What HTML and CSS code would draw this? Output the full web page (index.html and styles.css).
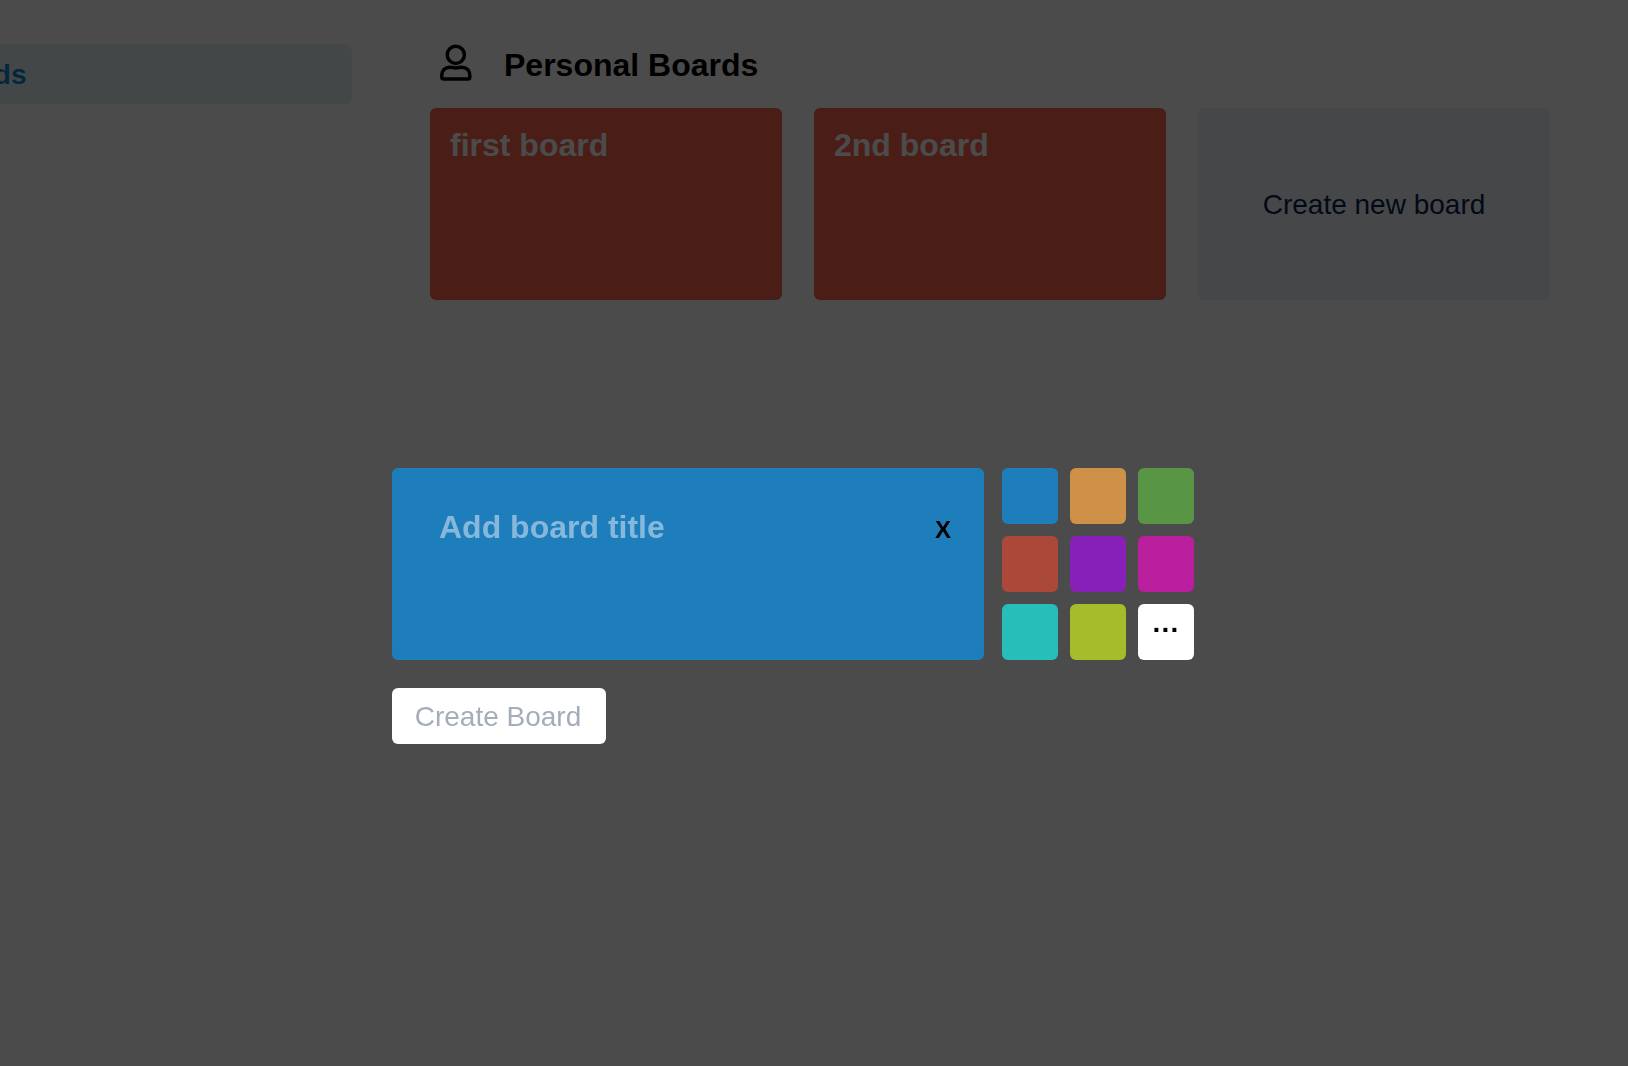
FILE: index.html
```
<!DOCTYPE html>
<html lang="en">
<head>
<meta charset="utf-8">
<title>Boards</title>
<link rel="stylesheet" href="styles.css">
</head>
<body>
<div class="page">
  <nav class="sidebar"><a class="sidebar-link">Boards</a></nav>
  <main class="content">
    <header class="section-header">
      <svg class="user-icon" viewBox="0 0 32 38" fill="none" stroke="#000" stroke-width="3.5">
        <circle cx="15.8" cy="10.8" r="8.6"/>
        <path d="M10 23.3C4.9 23.3 1.8 26.6 1.8 31V33Q1.8 35.1 3.9 35.1H27.7Q29.8 35.1 29.8 33V31C29.8 26.6 26.7 23.3 21.6 23.3C19.4 23.3 18.4 23.9 15.8 23.9S12.2 23.3 10 23.3Z"/>
      </svg>
      <h1 class="section-title">Personal Boards</h1>
    </header>
    <div class="boards">
      <div class="board">first board</div>
      <div class="board">2nd board</div>
      <div class="board board-new">Create new board</div>
    </div>
  </main>
</div>
<div class="overlay">
  <form class="modal">
    <div class="modal-top">
      <div class="title-card">
        <span class="title-placeholder">Add board title</span>
        <span class="close">X</span>
      </div>
      <div class="swatches">
        <span class="swatch blue"></span><span class="swatch orange"></span><span class="swatch green"></span>
        <span class="swatch red"></span><span class="swatch purple"></span><span class="swatch pink"></span>
        <span class="swatch teal"></span><span class="swatch lime"></span><span class="swatch more">...</span>
      </div>
    </div>
    <button class="create" type="button">Create Board</button>
  </form>
</div>
</body>
</html>
```
FILE: styles.css
```
* { box-sizing: border-box; }
body {
  margin: 0;
  height: 1066px;
  overflow: hidden;
  background: #fff;
  font-family: "Liberation Sans", Arial, Helvetica, sans-serif;
}
.page { display: flex; gap: 78px; padding-top: 44px; }
.sidebar { width: 352px; flex: none; }
.sidebar-link {
  display: flex;
  align-items: center;
  justify-content: flex-start;
  height: 60px;
  padding-top: 2px;
  border-radius: 0 8px 8px 0;
  background: #e2f2f3;
  color: #1686c8;
  font-size: 28px;
  font-weight: bold;
  text-indent: -70px;
}
.content { flex: none; }
.section-header { display: flex; align-items: flex-start; height: 64px; padding-left: 10px; gap: 32px; }
.user-icon { width: 32px; height: 38px; }
.section-title { margin: 3px 0 0; font-size: 32px; line-height: 36px; }
.boards { display: flex; gap: 32px; }
.board {
  width: 352px;
  height: 192px;
  padding: 19px 20px;
  border-radius: 6px;
  background: #fa6650;
  color: #fff;
  font-size: 32px;
  font-weight: bold;
  line-height: 36px;
}
.board-new {
  display: flex;
  align-items: center;
  justify-content: center;
  padding: 21px 20px 19px;
  background: #eef1f4;
  color: #092550;
  font-size: 28px;
  font-weight: normal;
}
.overlay {
  position: fixed;
  inset: 0;
  padding: 468px 0 0 392px;
  background: rgba(0, 0, 0, .704);
}
.modal-top { display: flex; gap: 18px; }
.title-card {
  display: flex;
  justify-content: space-between;
  align-items: baseline;
  width: 592px;
  height: 192px;
  padding: 41px 33px 0 47px;
  border-radius: 6px;
  background: #1e7dbb;
}
.title-placeholder { color: #86b8db; font-size: 32px; font-weight: bold; line-height: 36px; }
.close { color: #000; font-size: 24px; font-weight: bold; }
.swatches { display: grid; grid-template-columns: repeat(3, 56px); grid-auto-rows: 56px; gap: 12px; }
.swatch { border-radius: 6px; }
.blue { background: #1e7dbb; }
.orange { background: #cf9147; }
.green { background: #589645; }
.red { background: #ab483a; }
.purple { background: #8720b8; }
.pink { background: #ba1f9d; }
.teal { background: #27beb9; }
.lime { background: #a6bc2b; }
.more {
  display: flex;
  justify-content: center;
  background: #fff;
  color: #000;
  font-size: 28px;
  font-weight: bold;
  letter-spacing: 1.2px;
  line-height: 38px;
}
.create {
  display: block;
  width: 214px;
  height: 56px;
  margin-top: 28px;
  padding: 1px 2px 0 0;
  border: 0;
  border-radius: 6px;
  background: #fff;
  color: #a5adba;
  font: 28px "Liberation Sans", Arial, Helvetica, sans-serif;
}
```
